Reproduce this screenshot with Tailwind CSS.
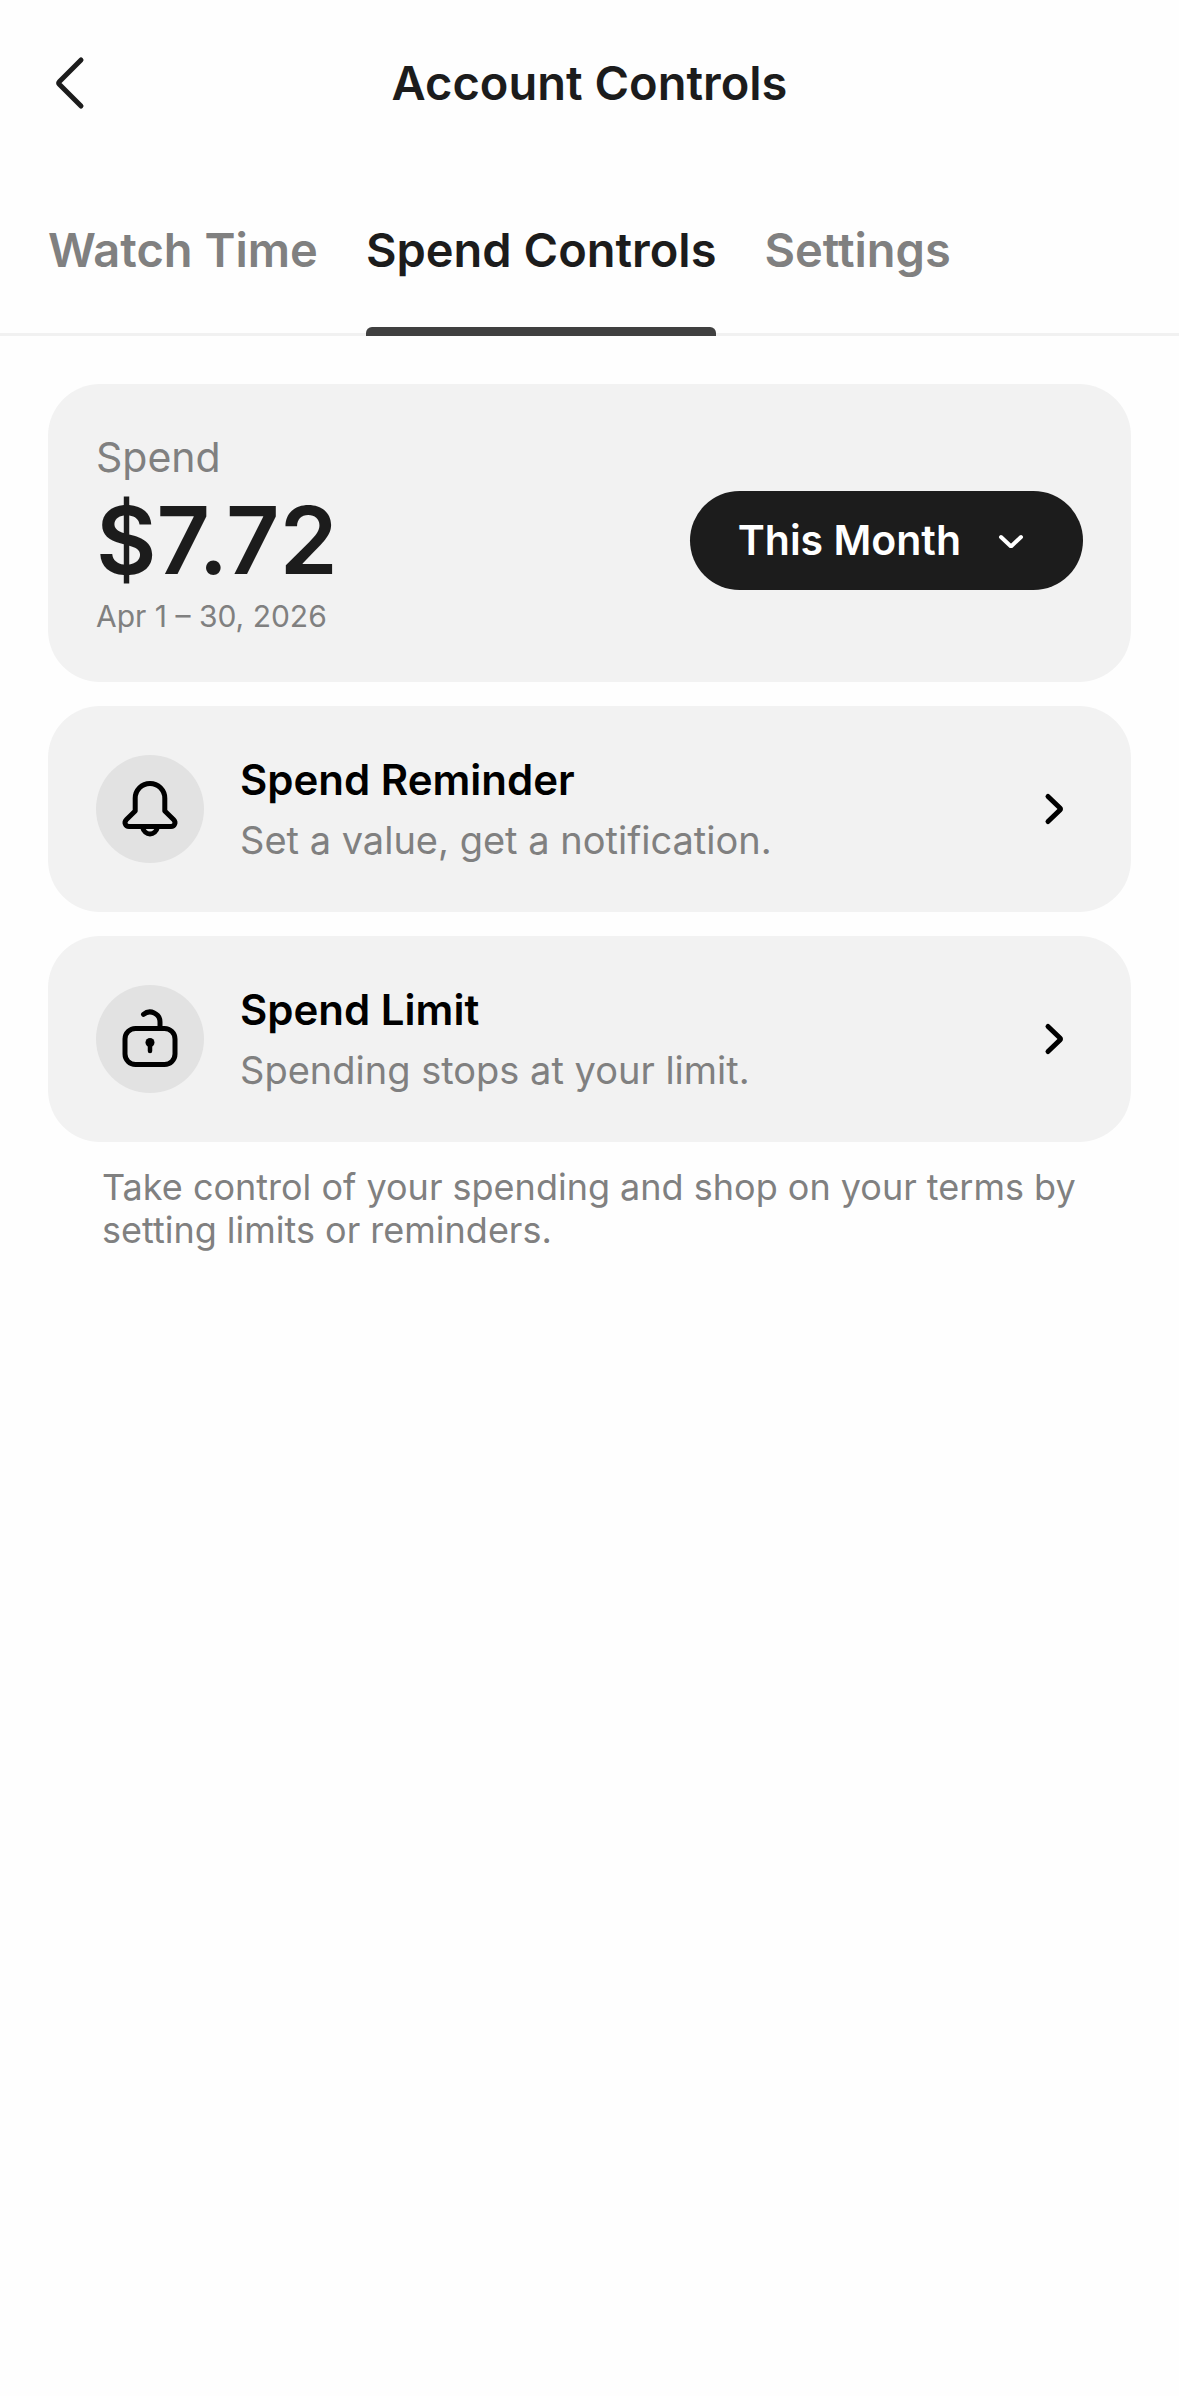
<!DOCTYPE html>
<html lang="en">
<head>
  <meta charset="UTF-8" />
  <meta name="viewport" content="width=device-width, initial-scale=1.0"/>
  <title>Account Controls</title>
  <script src="https://cdn.jsdelivr.net/npm/@tailwindcss/browser@4"></script>
</head>

<body class="bg-[#fefefe] min-h-screen font-['Inter',sans-serif] text-[#1c1c1c]">

  <!-- Header -->
  <header class="relative flex items-center justify-center h-[166px]">
    <button type="button" aria-label="Back" class="absolute left-12 p-1">
      <svg class="w-10 h-14" viewBox="0 0 40 56" fill="none" stroke="currentColor" stroke-width="5" stroke-linecap="round" stroke-linejoin="round">
        <path d="M29 5 L7.500 26.500 Q6 28 7.500 29.500 L29 51" />
      </svg>
    </button>
    <h1 class="text-[47px] font-semibold">Account Controls</h1>
  </header>

  <!-- Tabs -->
  <nav role="tablist" class="flex gap-12 px-12 h-[170px] border-b-3 border-[#f1f1f1] text-[47px] font-semibold text-[#808080]">
    <button type="button" role="tab" aria-selected="false" class="pt-0.5">Watch Time</button>
    <button type="button" role="tab" aria-selected="true" class="relative pt-0.5 text-[#1c1c1c]">
      Spend Controls
      <span class="absolute inset-x-0 -bottom-[3px] h-[9px] rounded-t-md bg-[#404040]"></span>
    </button>
    <button type="button" role="tab" aria-selected="false" class="pt-0.5">Settings</button>
  </nav>

  <main class="flex flex-col gap-6 p-12">

    <!-- Spend summary -->
    <section class="flex items-end justify-between bg-[#f2f2f2] rounded-[52px] p-12">
      <div class="text-[#808080]">
        <h2 class="text-[41px] leading-[50px]">Spend</h2>
        <p class="text-[93px] leading-[116px] font-semibold text-[#1c1c1c]">$7.72</p>
        <p class="text-[30px] leading-9">Apr 1 – 30, 2026</p>
      </div>
      <div class="relative flex items-center mb-11">
        <select aria-label="Period" class="appearance-none field-sizing-content h-[99px] rounded-full bg-[#1c1c1c] pl-12 pr-[122px] text-[41px] font-semibold text-white">
          <option>This Month</option>
          <option>Last Month</option>
        </select>
        <svg class="pointer-events-none absolute right-14 w-8 h-8" viewBox="0 0 32 32" fill="none" stroke="white" stroke-width="4" stroke-linecap="round" stroke-linejoin="round">
          <path d="M6 12 L15 20.500 Q16 21.500 17 20.500 L26 12" />
        </svg>
      </div>
    </section>

    <!-- Spend reminder -->
    <a href="#reminder" class="flex items-center gap-9 bg-[#f2f2f2] rounded-[52px] p-12 text-black">
      <span class="flex items-center justify-center size-[108px] shrink-0 rounded-full bg-[#e2e2e2]">
        <svg class="size-[60px]" viewBox="0 0 60 60" fill="none" stroke="currentColor" stroke-width="5" stroke-linejoin="round">
          <path d="M15.200 19.300 A14.800 14.800 0 0 1 44.800 19.300 V32 L53.500 40.500 C56.500 43.500 54.500 47.500 51 47.500 H9 C5.500 47.500 3.500 43.500 6.500 40.500 L15.200 32 Z" />
          <path d="M22.500 48 C24.500 57.300 35.500 57.300 37.500 48" />
        </svg>
      </span>
      <span class="flex flex-1 flex-col gap-3 pt-0.5 leading-[48px]">
        <span class="text-[42px] font-semibold">Spend Reminder</span>
        <span class="text-[38px] text-[#808080]">Set a value, get a notification.</span>
      </span>
      <svg class="w-[60px] h-9" viewBox="0 0 60 36" fill="none" stroke="currentColor" stroke-width="5" stroke-linecap="round" stroke-linejoin="round">
        <path d="M25 5.500 L37 17 Q38 18 37 19 L25 30.500" />
      </svg>
    </a>

    <!-- Spend limit -->
    <a href="#limit" class="flex items-center gap-9 bg-[#f2f2f2] rounded-[52px] p-12 text-black">
      <span class="flex items-center justify-center size-[108px] shrink-0 rounded-full bg-[#e2e2e2]">
        <svg class="size-[60px]" viewBox="0 0 60 60" fill="none" stroke="currentColor" stroke-width="5" stroke-linecap="round">
          <rect x="5" y="19.500" width="50" height="36" rx="10.500" />
          <path d="M23.500 5.400 A10 10 0 0 1 40 13 V19" />
          <circle cx="30" cy="33.500" r="4.500" fill="currentColor" stroke="none" />
          <path d="M30 35 V42" stroke-width="4.500" />
        </svg>
      </span>
      <span class="flex flex-1 flex-col gap-3 pt-0.5 leading-[48px]">
        <span class="text-[42px] font-semibold">Spend Limit</span>
        <span class="text-[38px] text-[#808080]">Spending stops at your limit.</span>
      </span>
      <svg class="w-[60px] h-9" viewBox="0 0 60 36" fill="none" stroke="currentColor" stroke-width="5" stroke-linecap="round" stroke-linejoin="round">
        <path d="M25 5.500 L37 17 Q38 18 37 19 L25 30.500" />
      </svg>
    </a>

    <p class="pl-[54px] pr-12 text-[36px] leading-[43px] text-[#808080]">Take control of your spending and shop on your terms by setting limits or reminders.</p>
  </main>

</body>
</html>
